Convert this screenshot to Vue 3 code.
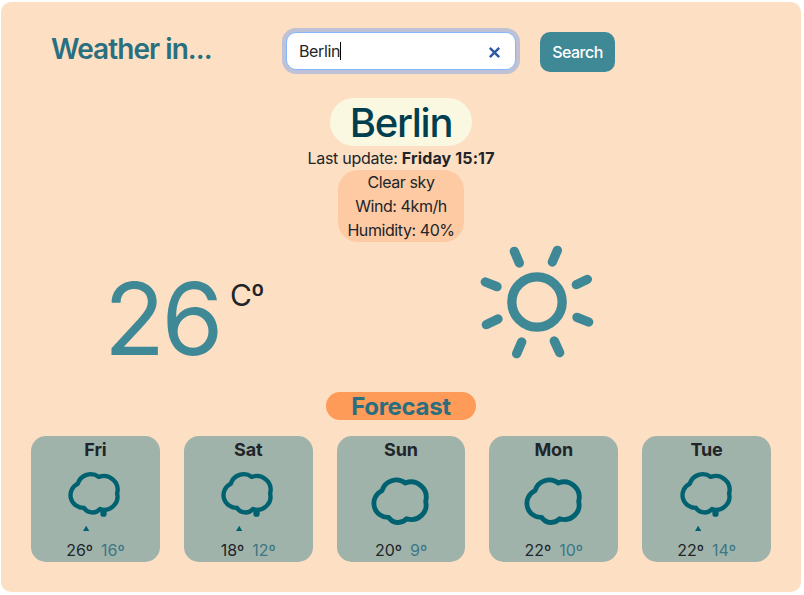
<script setup>
import { ref } from 'vue'

const city = ref('Berlin')
const details = ['Clear sky', 'Wind: 4km/h', 'Humidity: 40%']
const days = [
  { name: 'Fri', icon: 'rain', max: 26, min: 16 },
  { name: 'Sat', icon: 'rain', max: 18, min: 12 },
  { name: 'Sun', icon: 'cloud', max: 20, min: 9 },
  { name: 'Mon', icon: 'cloud', max: 22, min: 10 },
  { name: 'Tue', icon: 'rain', max: 22, min: 14 },
]
</script>

<template>
  <main class="weather">
    <header class="top">
      <h2 class="heading">Weather in...</h2>
      <form class="search" @submit.prevent>
        <label class="field">
          <span class="value">{{ city }}</span>
          <svg class="clear" viewBox="0 0 12 12"><path d="M1.7 1.7L10.3 10.3M10.3 1.7L1.7 10.3" /></svg>
        </label>
        <button class="submit" type="submit">Search</button>
      </form>
    </header>

    <section class="summary">
      <h1 class="city">{{ city }}</h1>
      <p class="updated">Last update: <strong>Friday 15:17</strong></p>
      <ul class="details">
        <li v-for="d in details" :key="d">{{ d }}</li>
      </ul>
    </section>

    <section class="now">
      <div class="temp"><span class="degrees">26</span><span class="unit">Cº</span></div>
      <svg class="sun" viewBox="0 0 420 405">
        <circle cx="201" cy="201" r="75.5" />
        <path d="M133 49L148 84M262 46L247 81M352 133L319 149M46 141L81 155M49 269L84 252M155 321L140 356M253 318L269 353M321 247L356 261" />
      </svg>
    </section>

    <h3 class="forecast-title">Forecast</h3>
    <section class="forecast">
      <article v-for="day in days" :key="day.name" class="day">
        <h4>{{ day.name }}</h4>
        <svg class="icon" viewBox="0 0 210 255">
          <path
            v-if="day.icon === 'cloud'"
            class="outline"
            transform="translate(-168 -215)"
            d="M216 331A45 45 0 0 1 286 308A46 46 0 0 1 347 363A44 44 0 0 1 290 415A34 34 0 0 1 236 411A42 42 0 0 1 216 331Z"
          />
          <g v-else>
            <path class="outline" transform="translate(-141 -202.5) scale(.9)" d="M216 331A45 45 0 0 1 286 308A46 46 0 0 1 347 363A44 44 0 0 1 290 415A34 34 0 0 1 236 411A42 42 0 0 1 216 331Z" />
            <path class="solid" d="M121 172H140V185A9.5 9.5 0 0 1 121 185ZM69 237L78.5 221L88 237Z" />
          </g>
        </svg>
        <p class="range"><span>{{ day.max }}º</span><span class="min">{{ day.min }}º</span></p>
      </article>
    </section>
  </main>
</template>

<style>
body {
  margin: 0;
  background: #fff;
}
</style>

<style scoped>
* {
  box-sizing: border-box;
}
h1, h2, h3, h4, p, ul {
  margin: 0;
  padding: 0;
}
.weather {
  display: flex;
  flex-direction: column;
  width: 800px;
  height: 590px;
  margin: 2px 0 0 1px;
  padding: 30px 30px 0;
  border-radius: 10px;
  background: #fddfc3;
  color: #212529;
  font: 16px/24px Inter, "Liberation Sans", sans-serif;
}
.top {
  display: flex;
  height: 66px;
  padding-left: 20px;
}
.heading {
  width: 235px;
  color: #2a6f7f;
  font-size: 28px;
  line-height: 34px;
  font-weight: 600;
  letter-spacing: -0.95px;
  white-space: nowrap;
}
.search {
  display: flex;
  gap: 24px;
}
.field {
  display: flex;
  align-items: center;
  justify-content: space-between;
  width: 230px;
  height: 38px;
  padding: 0 14px 0 12px;
  border: 1px solid #86b7fe;
  border-radius: 10px;
  background: #fff;
  box-shadow: 0 0 0 4px #bfc2d6;
}
.value {
  border-right: 1px solid #000;
  line-height: 18px;
  letter-spacing: -0.35px;
}
.clear {
  width: 13px;
  height: 13px;
  margin-top: 3px;
}
.clear path {
  stroke: #3158a6;
  stroke-width: 2.3;
}
.submit {
  width: 75px;
  height: 40px;
  padding: 0;
  border: 0;
  border-radius: 10px;
  background: #3f8896;
  color: #fff;
  font: 500 16px Inter, "Liberation Sans", sans-serif;
  letter-spacing: -0.55px;
}
.summary {
  display: flex;
  flex-direction: column;
  align-items: center;
}
.city {
  width: 142px;
  height: 48px;
  padding-top: 1px;
  border-radius: 24px;
  background: #fbf8e2;
  color: #003f50;
  font-size: 40px;
  line-height: 48px;
  font-weight: 500;
  letter-spacing: -1.3px;
  text-align: center;
}
.updated {
  letter-spacing: -0.26px;
  white-space: nowrap;
}
.updated strong {
  font-weight: 700;
  letter-spacing: 0.13px;
}
.details {
  width: 126px;
  border-radius: 20px;
  background: #fdcaa3;
  letter-spacing: -0.42px;
  list-style: none;
  text-align: center;
  white-space: nowrap;
}
.now {
  display: flex;
  height: 150px;
}
.temp {
  display: flex;
  width: 439px;
  padding: 17px 0 0 73px;
}
.degrees {
  color: #3f8896;
  font-size: 100px;
  line-height: 120px;
  letter-spacing: -3.5px;
}
.unit {
  margin: 18px 0 0 10px;
  font-size: 30px;
  line-height: 36px;
  letter-spacing: -1px;
}
.sun {
  width: 140px;
  height: 135px;
  margin-top: -7px;
}
.sun * {
  fill: none;
  stroke: #3f8896;
  stroke-width: 28;
  stroke-linecap: round;
}
.forecast-title {
  align-self: center;
  width: 150px;
  height: 28px;
  margin-bottom: 16px;
  padding-top: 1px;
  border-radius: 14px;
  background: #fe9b59;
  color: #2a6f7f;
  font-size: 24px;
  line-height: 28px;
  font-weight: 700;
  letter-spacing: -0.3px;
  text-align: center;
}
.forecast {
  display: grid;
  grid-template-columns: repeat(5, 1fr);
  gap: 24px;
}
.day {
  display: flex;
  flex-direction: column;
  align-items: center;
  height: 126px;
  border-radius: 15px;
  background: #9fb3ab;
}
.day h4 {
  font-size: 18px;
  line-height: 27px;
  font-weight: 700;
  letter-spacing: -0.15px;
}
.icon {
  width: 70px;
  height: 85px;
  margin-top: -11px;
}
.outline {
  fill: none;
  stroke: #006270;
  stroke-width: 14.5;
  stroke-linejoin: round;
}
.solid {
  fill: #006270;
}
.range {
  display: flex;
  gap: 8px;
  margin-top: 1px;
}
.min {
  color: #3b7785;
}
</style>
